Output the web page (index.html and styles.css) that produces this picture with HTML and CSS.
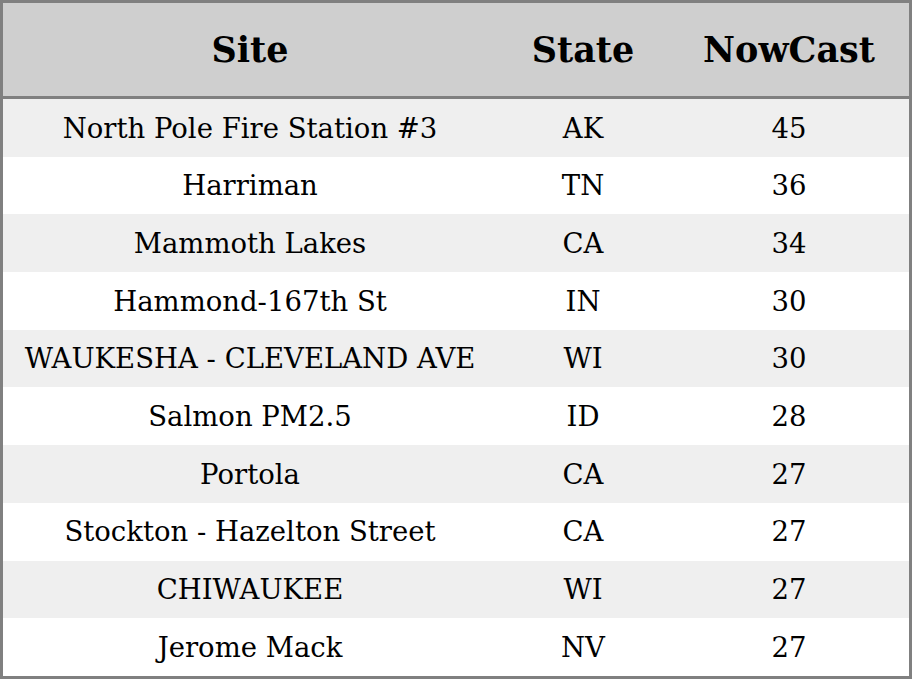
FILE: index.html
```html
<!DOCTYPE html>
<html>
<head>
<meta charset="utf-8">
<link rel="stylesheet" href="styles.css">
</head>
<body>
<table class="aq">
  <colgroup>
    <col class="c-site">
    <col class="c-state">
    <col class="c-now">
  </colgroup>
  <thead>
    <tr><th>Site</th><th>State</th><th>NowCast</th></tr>
  </thead>
  <tbody>
    <tr><td>North Pole Fire Station #3</td><td>AK</td><td>45</td></tr>
    <tr><td>Harriman</td><td>TN</td><td>36</td></tr>
    <tr><td>Mammoth Lakes</td><td>CA</td><td>34</td></tr>
    <tr><td>Hammond-167th St</td><td>IN</td><td>30</td></tr>
    <tr><td>WAUKESHA - CLEVELAND AVE</td><td>WI</td><td>30</td></tr>
    <tr><td>Salmon PM2.5</td><td>ID</td><td>28</td></tr>
    <tr><td>Portola</td><td>CA</td><td>27</td></tr>
    <tr><td>Stockton - Hazelton Street</td><td>CA</td><td>27</td></tr>
    <tr><td>CHIWAUKEE</td><td>WI</td><td>27</td></tr>
    <tr><td>Jerome Mack</td><td>NV</td><td>27</td></tr>
  </tbody>
</table>
</body>
</html>
```
FILE: styles.css
```css
html, body {
  margin: 0;
  padding: 0;
  background: #ffffff;
}
.aq {
  width: 912px;
  height: 679px;
  border-collapse: separate;
  border-spacing: 0;
  border: 3px solid #808080;
  box-sizing: border-box;
  font-family: "DejaVu Serif", serif;
  color: #000;
  table-layout: fixed;
}
.c-site { width: 494px; }
.c-state { width: 172px; }
.c-now { width: 240px; }
.aq th {
  background: #cfcfcf;
  height: 96px;
  padding: 0;
  font-size: 35px;
  font-weight: bold;
  line-height: 1;
  border-bottom: 3px solid #808080;
  box-sizing: border-box;
}
.aq td {
  height: 56px;
  padding: 1px 0 0;
  text-align: center;
  font-size: 27.5px;
  line-height: 1;
  white-space: nowrap;
}
.aq tbody tr:nth-child(odd) td {
  background: #efefef;
}
```
